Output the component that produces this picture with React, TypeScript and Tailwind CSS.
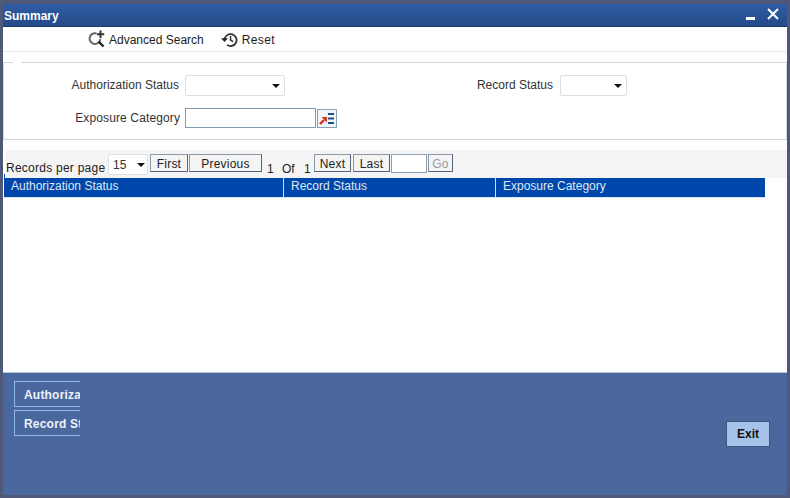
function Caret() {
  return (
    <svg width="8" height="4" viewBox="0 0 8 4" className="shrink-0">
      <path d="M0 0h8L4 4z" fill="#111" />
    </svg>
  );
}

function Dropdown({ className, value }: { className: string; value?: string }) {
  return (
    <div className={`flex items-center justify-between rounded-[2px] border border-[#dcdfe4] bg-white ${className}`}>
      <span className="pl-1 text-[#333]">{value}</span>
      <Caret />
    </div>
  );
}

function PagerButton({ label, className, disabled }: { label: string; className: string; disabled?: boolean }) {
  return (
    <div
      className={`flex h-[18px] items-center justify-center border border-t-[#8a98a8] border-l-[#8a98a8] border-r-[#56657a] border-b-[#56657a] bg-[#f4f4f4] pt-px tracking-[0.2px] ${disabled ? "text-[#9a9a9a]" : "text-[#222]"} ${className}`}
    >
      {label}
    </div>
  );
}

export default function App() {
  return (
    <div className="h-[498px] w-[790px] overflow-hidden bg-[#50587a] pt-[4px] pr-[3px] pb-[3px] pl-[3px] font-['Liberation_Sans',Arial,sans-serif] text-[12px] leading-none text-[#333]">
      <div className="flex h-full flex-col">
        {/* title bar */}
        <div className="flex h-[23px] shrink-0 items-center justify-between bg-gradient-to-b from-[#2f5ca4] to-[#234a88] pr-[8px] pl-[1px] shadow-[inset_0_-1px_0_#1b3a6e]">
          <span className="text-[12px] font-bold text-white">Summary</span>
          <div className="flex items-center gap-[12px]">
            <div className="mt-[6px] h-[3px] w-[9px] bg-white" />
            <svg width="12" height="12" viewBox="0 0 12 12" className="mb-[4px]">
              <path d="M1 1l10 10M11 1L1 11" stroke="#fff" strokeWidth="2" />
            </svg>
          </div>
        </div>

        {/* toolbar */}
        <div className="flex h-[25px] shrink-0 items-center border-b border-[#e6e8ea] bg-white pl-[85px] text-[12px] text-[#222]">
          <svg width="18" height="18" viewBox="0 0 18 18" className="mr-[3px]" fill="none">
            <path d="M8.5 3.4A5.4 5.4 0 1 0 12.4 9" stroke="#666" strokeWidth="2" />
            <path d="M10.5 11.5l5 5" stroke="#222" strokeWidth="2.4" />
            <path d="M12.5 0.5v7.5M8.8 4.2h7.4" stroke="#333" strokeWidth="2" />
          </svg>
          <span className="pt-[2px]">Advanced Search</span>
          <svg width="17" height="17" viewBox="0 0 17 17" className="mr-[4px] ml-[17px]" fill="none">
            <path d="M3.6 8.5A6 6 0 1 1 6 13.9" stroke="#333" strokeWidth="1.8" />
            <path d="M0 7.2h7L3.5 11z" fill="#222" />
            <path d="M9.5 5v4l2.6 1.6" stroke="#333" strokeWidth="1.5" />
          </svg>
          <span className="pt-[2px] tracking-[0.4px]">Reset</span>
        </div>

        <div className="flex min-h-0 flex-1 flex-col bg-white">
          {/* search criteria */}
          <div className="relative mt-[10px] h-[78px] shrink-0 border-y border-r border-l border-[#cdd8e2] text-[12px]">
            <div className="absolute -top-px left-[9px] h-px w-[8px] bg-white" />
            <div className="mt-[12px] flex h-[21px] items-center">
              <span className="w-[181px] pr-[6px] pb-[2px] text-right">Authorization Status</span>
              <Dropdown className="h-[21px] w-[100px] pr-[4px]" />
              <span className="w-[275px] pr-[7px] pb-[2px] text-right">Record Status</span>
              <Dropdown className="h-[21px] w-[67px] pr-[4px]" />
            </div>
            <div className="mt-[12px] flex h-[20px] items-center">
              <span className="w-[181px] pr-[5px] text-right tracking-[0.12px]">Exposure Category</span>
              <div className="h-[20px] w-[131px] border border-[#7d9ab4] bg-white" />
              <div className="ml-px flex h-[19px] w-[20px] items-center justify-center border border-[#8aa0b4] bg-[#f2f5f8]">
                <svg width="16" height="13" viewBox="0 0 16 13">
                  <path d="M1 12l4-4" stroke="#d8301c" strokeWidth="2.4" />
                  <path d="M2.5 5H8v5.5z" fill="#d8301c" />
                  <path d="M9 2h6M9 6.5h6M9 11h6" stroke="#1f4e8c" strokeWidth="2" />
                </svg>
              </div>
            </div>
          </div>

          {/* pager */}
          <div className="mt-[10px] ml-[3px] flex h-[28px] shrink-0 items-start bg-[#f4f4f4] pt-[4px] text-[12px] text-[#222]">
            <span className="mt-[8px] w-[102px] tracking-[0.25px]">Records per page</span>
            <Dropdown className="h-[21px] w-[40px] pr-[2px] text-[#333]" value="15" />
            <PagerButton label="First" className="ml-[2px] w-[38px]" />
            <PagerButton label="Previous" className="ml-px w-[73px]" />
            <span className="mt-[9px] ml-[5px] w-[15px]">1</span>
            <span className="mt-[9px] w-[22px]">Of</span>
            <span className="mt-[9px] w-[10px]">1</span>
            <PagerButton label="Next" className="w-[37px]" />
            <PagerButton label="Last" className="ml-[2px] w-[37px]" />
            <div className="ml-px h-[19px] w-[36px] border border-[#8aa0b4] bg-white" />
            <PagerButton label="Go" className="ml-px w-[25px]" disabled />
          </div>

          {/* results table */}
          <div className="relative ml-px flex h-[20px] w-[761px] shrink-0 items-center border-b border-[#dbe6f5] bg-[#0047ab] text-[12px] text-[#dfe8f5]">
            <div className="absolute -top-[4px] left-0 h-[4px] w-px bg-[#0047ab]" />
            <div className="h-full w-[280px] border-r border-[#cfdcf0] pt-[2px] pl-[7px]">Authorization Status</div>
            <div className="h-full w-[212px] border-r border-[#cfdcf0] pt-[2px] pl-[7px]">Record Status</div>
            <div className="h-full flex-1 pt-[2px] pl-[7px]">Exposure Category</div>
          </div>
          <div className="flex-1 bg-white" />
        </div>

        {/* footer */}
        <div className="flex h-[123px] shrink-0 items-start justify-between border-t border-[#b8c6da] bg-[#4a689e] pt-[8px] pr-[17px] pl-[11px]">
          <div className="flex flex-col gap-[3px]">
            <div className="flex h-[26px] w-[66px] items-center border-y border-l border-[#8cb8f0] pt-[2px] pl-[9px] font-bold tracking-[0.2px] whitespace-nowrap text-[#eef2fa] [clip-path:inset(0)]">Authorization Status</div>
            <div className="flex h-[26px] w-[66px] items-center border-y border-l border-[#8cb8f0] pt-[2px] pl-[9px] font-bold tracking-[0.2px] whitespace-nowrap text-[#eef2fa] [clip-path:inset(0)]">Record Status</div>
          </div>
          <div className="mt-[40px] flex h-[26px] w-[44px] items-center justify-center border border-[#3d5680] bg-[#a6c2e8] font-bold text-[#111]">Exit</div>
        </div>
      </div>
    </div>
  );
}
